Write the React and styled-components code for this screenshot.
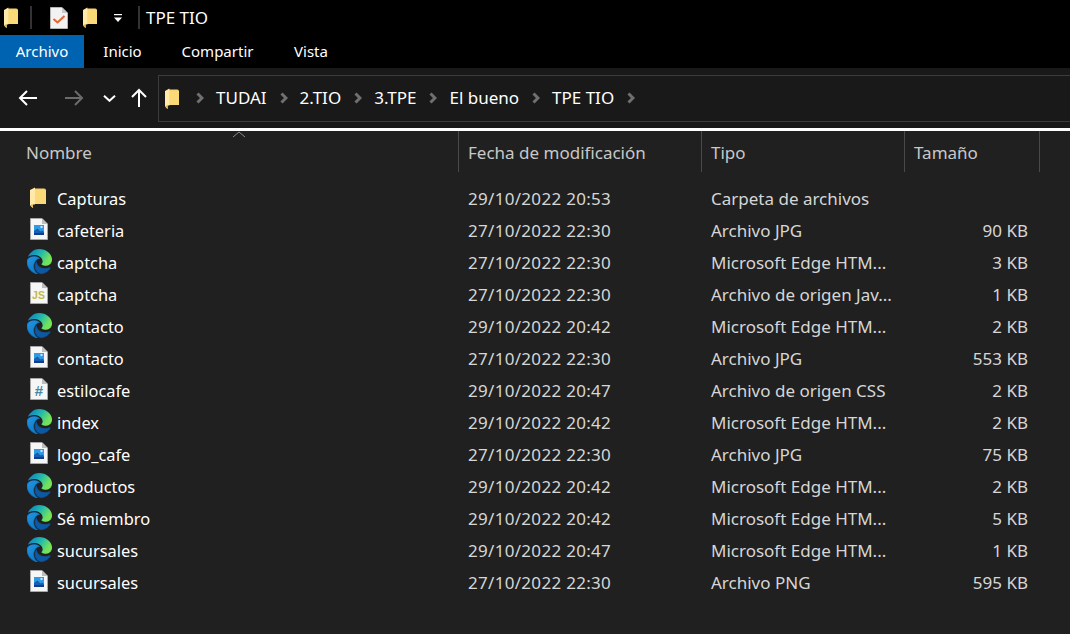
import styled, { createGlobalStyle } from 'styled-components';

const Global = createGlobalStyle`
  html, body { margin:0; padding:0; background:#202020; }
  body { font-family:"Noto Sans","Open Sans",sans-serif; }
`;

const Page = styled.div`width:1070px; height:634px; overflow:hidden; background:#202020; display:flex; flex-direction:column;`;
const TitleBar = styled.div`height:35px; background:#000; display:flex; align-items:center; color:#fff; padding-left:4px;`;
const QuickItem = styled.div`display:flex; margin-left:${p => p.$ml || 0}px;`;
const Divider = styled.div`width:2px; height:23px; background:#333; margin-left:${p => p.$ml}px;`;
const TitleText = styled.span`margin-left:6px; font-size:17px;`;
const Tabs = styled.div`height:33px; background:#000; display:flex;`;
const Tab = styled.div`
  width:${p => p.$w}px; display:flex; align-items:center; justify-content:center; padding-bottom:2px; box-sizing:border-box;
  font-size:15px; color:#fff; background:${p => (p.$active ? '#0063b1' : 'transparent')};
`;
const NavBar = styled.div`height:60px; background:#191919; display:flex; align-items:center;`;
const NavButtons = styled.div`width:158px; flex:none; display:flex; align-items:center; height:100%;`;
const NavBtn = styled.div`width:${p => p.$w}px; margin-left:${p => p.$ml || 0}px; display:flex; justify-content:center; align-items:center;`;
const AddressBox = styled.div`
  flex:1; height:45px; border:1px solid #3c3c3c; border-right:none; display:flex; align-items:center;
  padding-left:6px; color:#fff; font-size:17px;
`;
const Crumb = styled.span`display:flex; align-items:center;`;
const CrumbLabel = styled.span`margin-bottom:2px;`;
const Sep = styled.span`display:flex; width:8px; margin:0 12px 0 ${p => (p.$first ? 17 : 13)}px;`;
const Rule = styled.div`height:3px; background:#fff; flex:none;`;
const Header = styled.div`
  position:relative; height:41px; display:grid; grid-template-columns:458px 243px 203px 135px 1fr;
  color:#c8c8c8; font-size:17px; margin-bottom:10px;
`;
const HeadCell = styled.div`
  display:flex; align-items:center; padding:2px 0 0 ${p => p.$pl}px; box-sizing:border-box;
  border-left:${p => (p.$line ? '1px solid #4a4a4a' : 'none')};
`;
const SortCaret = styled.svg`position:absolute; left:232px; top:0;`;
const FileRow = styled.div`
  height:32px; display:grid; grid-template-columns:458px 243px 203px 124px; align-items:center;
  color:#d6d6d6; font-size:17px;
`;
const NameCell = styled.div`display:flex; align-items:center; color:#fff; font-size:16.4px;`;
const IconSlot = styled.div`width:57px; flex:none; box-sizing:border-box; display:flex; padding:0 0 2px ${p => (p.$edge ? 27 : 30)}px;`;
const DateCell = styled.div`padding-left:10px; letter-spacing:.3px;`;
const TypeCell = styled.div`padding-left:10px; white-space:nowrap;`;
const SizeCell = styled.div`text-align:right;`;

const Folder = ({ w = 16, h = 21 }) => (
  <svg width={w} height={h} viewBox="0 0 16 21" preserveAspectRatio="none">
    <path d="M4 1.5 H14 Q16 1.5 16 3.5 V17 H4 Z" fill="#f8d26f" />
    <path d="M5 3 H16 V17 H5 Z" fill="#fbd878" />
    <path d="M0 3 L5 .5 V17.5 L3 17.5 V21 L1 19.5 L0 18 Z" fill="#ffeaa8" />
    <path d="M3 17.5 V21 L1 19.5 V17.5 Z" fill="#e9b44c" />
  </svg>
);

const DocBase = ({ children, w = 18, h = 22 }) => (
  <svg width={w} height={h} viewBox="0 0 18 22">
    <path d="M.5.5H12L17.5 6V21.5H.5Z" fill="#f6f6f6" stroke="#a8a8a8" />
    <path d="M12 .5V6H17.5Z" fill="#bdbdbd" />
    {children}
  </svg>
);

const ImageDoc = () => (
  <DocBase>
    <rect x="4" y="7" width="10" height="10" fill="#2f9be6" />
    <path d="M4 17 V13 L7.5 10.5 L10.5 13.5 L12 12.5 L14 14 V17 Z" fill="#1a5cae" />
    <path d="M4 17 V15 H14 V17 Z" fill="#123f8c" />
    <rect x="10.5" y="8" width="2" height="2" fill="#cfe6fa" />
  </DocBase>
);

const GlyphText = styled.text`font-family:"Liberation Sans",sans-serif; font-weight:700;`;

const JsDoc = () => (
  <DocBase>
    <GlyphText x="8.5" y="17" fontSize="10.5" fill="#c2b84c" textAnchor="middle">JS</GlyphText>
  </DocBase>
);

const CssDoc = () => (
  <DocBase>
    <GlyphText x="9" y="18" fontSize="15" fill="#4a85a8" textAnchor="middle">#</GlyphText>
  </DocBase>
);

const EdgeIcon = ({ id }) => (
  <svg width="25" height="25" viewBox="0 0 24 24">
    <defs>
      <linearGradient id={`top${id}`} x1="0" y1="0.2" x2="1" y2="0.7">
        <stop offset="0" stopColor="#0f7fc4" />
        <stop offset="0.45" stopColor="#22b8ae" />
        <stop offset="0.85" stopColor="#74e25a" />
      </linearGradient>
      <linearGradient id={`left${id}`} x1="0" y1="0" x2="0.6" y2="1">
        <stop offset="0" stopColor="#2196e0" />
        <stop offset="1" stopColor="#0e78cc" />
      </linearGradient>
    </defs>
    <path d="M21.86 17.86q.14 0 .25.12.1.13.1.25t-.11.33l-.32.46-.43.53-.44.5q-.21.25-.38.42l-.22.23q-.58.53-1.34 1.04-.76.51-1.6.91-.86.4-1.74.64t-1.67.24q-.9 0-1.69-.28-.8-.28-1.48-.78-.68-.5-1.22-1.17-.53-.66-.92-1.44-.38-.77-.58-1.6-.2-.83-.2-1.67 0-1 .32-1.96.33-.97.87-1.8.14.95.55 1.77.41.82 1.02 1.5.6.68 1.38 1.21.78.54 1.64.9.86.36 1.77.56.92.2 1.8.2 1.12 0 2.18-.24 1.06-.23 2.06-.72l.2-.1.2-.05z" fill="#0c59a4" stroke="#0c59a4" strokeWidth=".8" />
    <path d="M6.36 16.59q0 1.1.27 2.15.27 1.06.78 2.03.51.96 1.24 1.77.74.82 1.66 1.4-1.47-.2-2.8-.74-1.33-.55-2.48-1.37-1.15-.83-2.08-1.9-.92-1.07-1.58-2.33T.36 14.94Q0 13.54 0 12.06q0-.81.32-1.49.31-.68.83-1.23.53-.55 1.2-.96.66-.4 1.35-.66.74-.27 1.5-.39.78-.12 1.55-.12.7 0 1.42.1.72.12 1.4.35.68.23 1.32.57.63.35 1.16.83-.35 0-.7.07-.33.07-.65.23v-.02q-.63.28-1.2.74-.57.46-1.05 1.04-.48.58-.87 1.26-.38.67-.65 1.39-.27.71-.42 1.44-.15.72-.15 1.38z" fill={`url(#left${id})`} stroke="#0e78cc" strokeWidth=".6" />
    <path d="M11.96.06q1.7 0 3.33.39 1.63.38 3.07 1.15 1.43.77 2.62 1.93 1.18 1.16 1.98 2.7.49.94.76 1.96.28 1 .28 2.08 0 .89-.23 1.7-.24.8-.69 1.48-.45.68-1.1 1.22-.64.53-1.45.88-.54.24-1.11.36-.58.13-1.16.13-.42 0-.97-.03-.54-.03-1.1-.12-.55-.1-1.05-.28-.5-.19-.84-.5-.12-.09-.23-.24-.1-.16-.1-.33 0-.15.16-.35.16-.2.35-.5.2-.28.36-.68.16-.4.16-.95 0-1.06-.4-1.96-.4-.91-1.06-1.64-.66-.74-1.52-1.28-.86-.55-1.79-.89-.84-.3-1.72-.44-.87-.14-1.76-.14-1.55 0-3.06.45T.94 7.55q.71-1.74 1.81-3.13Q3.85 3.03 5.2 2.05 6.55 1.07 8.2.55 9.88.06 11.96.06z" fill={`url(#top${id})`} />
  </svg>
);

const CheckDoc = () => (
  <svg width="18" height="22" viewBox="0 0 18 22">
    <path d="M.5.5H12L17.5 6V21.5H.5Z" fill="#f2f2f2" stroke="#b5b5b5" />
    <path d="M12 .5V6H17.5Z" fill="#c8c8c8" />
    <path d="M3.5 12 L7.5 15.5 L14.5 9" fill="none" stroke="#e8622a" strokeWidth="2" />
  </svg>
);

const Arrow = ({ dir, color }) => (
  <svg width="20" height="20" viewBox="0 0 20 20" fill="none" stroke={color} strokeWidth="2">
    {dir === 'left' && <path d="M19 10H2M9 3l-7 7 7 7" />}
    {dir === 'right' && <path d="M1 10H18M11 3l7 7-7 7" />}
    {dir === 'up' && <path d="M10 19V2M3 9l7-7 7 7" />}
  </svg>
);

const Chevron = () => (
  <svg width="13" height="7" viewBox="0 0 13 7" fill="none" stroke="#fff" strokeWidth="2">
    <path d="M1 .8l5.5 5 5.5-5" />
  </svg>
);

const CrumbSep = () => (
  <svg width="8" height="12" viewBox="0 0 8 12" fill="none" stroke="#707070" strokeWidth="3">
    <path d="M1.5 1.5l4.5 4.5-4.5 4.5" />
  </svg>
);

const QuickDrop = () => (
  <svg width="10" height="10" viewBox="0 0 10 10">
    <rect x="1" y="1" width="8" height="1.2" fill="#fff" />
    <path d="M1 4.5h8L5 9Z" fill="#fff" />
  </svg>
);

const ICONS = { folder: Folder, image: ImageDoc, js: JsDoc, css: CssDoc };

const FILES = [
  ['folder', 'Capturas', '29/10/2022 20:53', 'Carpeta de archivos', ''],
  ['image', 'cafeteria', '27/10/2022 22:30', 'Archivo JPG', '90 KB'],
  ['edge', 'captcha', '27/10/2022 22:30', 'Microsoft Edge HTM...', '3 KB'],
  ['js', 'captcha', '27/10/2022 22:30', 'Archivo de origen Jav...', '1 KB'],
  ['edge', 'contacto', '29/10/2022 20:42', 'Microsoft Edge HTM...', '2 KB'],
  ['image', 'contacto', '27/10/2022 22:30', 'Archivo JPG', '553 KB'],
  ['css', 'estilocafe', '29/10/2022 20:47', 'Archivo de origen CSS', '2 KB'],
  ['edge', 'index', '29/10/2022 20:42', 'Microsoft Edge HTM...', '2 KB'],
  ['image', 'logo_cafe', '27/10/2022 22:30', 'Archivo JPG', '75 KB'],
  ['edge', 'productos', '29/10/2022 20:42', 'Microsoft Edge HTM...', '2 KB'],
  ['edge', 'Sé miembro', '29/10/2022 20:42', 'Microsoft Edge HTM...', '5 KB'],
  ['edge', 'sucursales', '29/10/2022 20:47', 'Microsoft Edge HTM...', '1 KB'],
  ['image', 'sucursales', '27/10/2022 22:30', 'Archivo PNG', '595 KB'],
];

const CRUMBS = ['TUDAI', '2.TIO', '3.TPE', 'El bueno', 'TPE TIO'];

export default function App() {
  return (
    <Page>
      <Global />
      <TitleBar>
        <Folder w={14} h={21} />
        <Divider $ml={12} />
        <QuickItem $ml={18}><CheckDoc /></QuickItem>
        <QuickItem $ml={15}><Folder w={14} h={21} /></QuickItem>
        <QuickItem $ml={16}><QuickDrop /></QuickItem>
        <Divider $ml={15} />
        <TitleText>TPE TIO</TitleText>
      </TitleBar>
      <Tabs>
        <Tab $w={84} $active>Archivo</Tab>
        <Tab $w={77}>Inicio</Tab>
        <Tab $w={113}>Compartir</Tab>
        <Tab $w={74}>Vista</Tab>
      </Tabs>
      <NavBar>
        <NavButtons>
          <NavBtn $w={20} $ml={18}><Arrow dir="left" color="#fff" /></NavBtn>
          <NavBtn $w={20} $ml={26}><Arrow dir="right" color="#6b6b6b" /></NavBtn>
          <NavBtn $w={14} $ml={18}><Chevron /></NavBtn>
          <NavBtn $w={20} $ml={13}><Arrow dir="up" color="#fff" /></NavBtn>
        </NavButtons>
        <AddressBox>
          <Folder w={14} h={21} />
          {CRUMBS.map((c, i) => (
            <Crumb key={c}>
              <Sep $first={i === 0}><CrumbSep /></Sep>
              <CrumbLabel>{c}</CrumbLabel>
            </Crumb>
          ))}
          <Sep><CrumbSep /></Sep>
        </AddressBox>
      </NavBar>
      <Rule />
      <Header>
        <HeadCell $pl={26}>Nombre</HeadCell>
        <HeadCell $pl={9} $line>Fecha de modificación</HeadCell>
        <HeadCell $pl={9} $line>Tipo</HeadCell>
        <HeadCell $pl={9} $line>Tamaño</HeadCell>
        <HeadCell $pl={0} $line />
        <SortCaret width="14" height="7" viewBox="0 0 14 7" fill="none" stroke="#8a8a8a">
          <path d="M1 6l6-5 6 5" />
        </SortCaret>
      </Header>
      {FILES.map(([kind, name, date, type, size], i) => {
        const Icon = ICONS[kind];
        return (
          <FileRow key={i}>
            <NameCell>
              <IconSlot $edge={kind === 'edge'}>{kind === 'edge' ? <EdgeIcon id={i} /> : <Icon />}</IconSlot>
              {name}
            </NameCell>
            <DateCell>{date}</DateCell>
            <TypeCell>{type}</TypeCell>
            <SizeCell>{size}</SizeCell>
          </FileRow>
        );
      })}
    </Page>
  );
}
